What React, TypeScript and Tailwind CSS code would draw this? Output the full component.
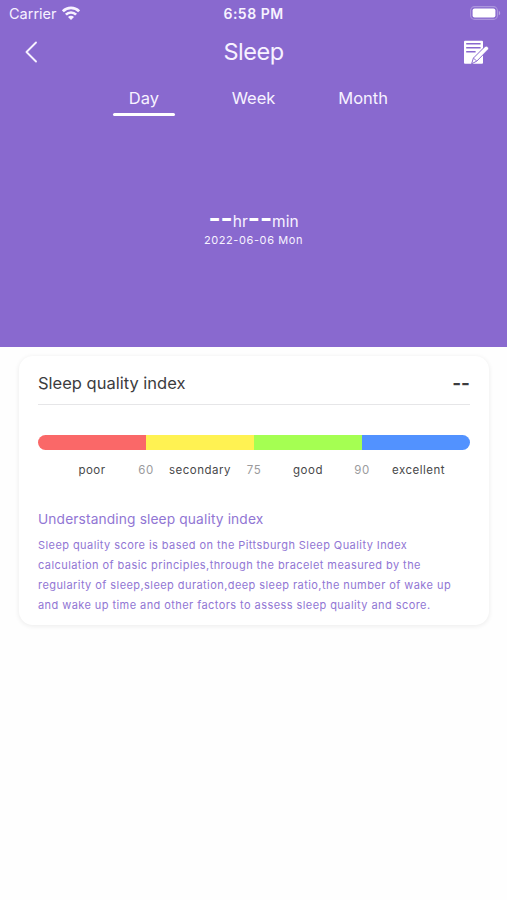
const TABS = ['Day', 'Week', 'Month'];

const LEVELS = [
  { label: 'poor', color: 'bg-[#fa6868]', limit: '60' },
  { label: 'secondary', color: 'bg-[#fff252]', limit: '75' },
  { label: 'good', color: 'bg-[#a5ff52]', limit: '90' },
  { label: 'excellent', color: 'bg-[#5292ff]' },
];

const DESCRIPTION = [
  'Sleep quality score is based on the Pittsburgh Sleep Quality Index',
  'calculation of basic principles,through the bracelet measured by the',
  'regularity of sleep,sleep duration,deep sleep ratio,the number of wake up',
  'and wake up time and other factors to assess sleep quality and score.',
];

function WifiIcon() {
  return (
    <svg className="-mt-0.5" width="18" height="14" viewBox="0 0 18 14" fill="none" stroke="currentColor" strokeWidth="2.7">
      <path d="M0.9 5.3a11.5 11.5 0 0 1 16.2 0" />
      <path d="M3.9 8.6a7.2 7.2 0 0 1 10.2 0" />
      <path d="M9 14 6 10.9a4.2 4.2 0 0 1 6 0z" fill="currentColor" stroke="none" />
    </svg>
  );
}

function BatteryIcon() {
  return (
    <svg className="-mt-px" width="31" height="14" viewBox="0 0 31 14">
      <rect x="0.6" y="0.6" width="26.8" height="12.8" rx="4" fill="none" stroke="white" strokeOpacity="0.3" strokeWidth="1.1" />
      <rect x="2.6" y="2.4" width="22.8" height="9.2" rx="2" fill="white" />
      <path d="M28.8 4.7v4.6c1.9-.8 1.9-3.8 0-4.6z" fill="white" fillOpacity="0.4" />
    </svg>
  );
}

function NoteIcon() {
  return (
    <svg width="26" height="25" viewBox="0 0 26 25">
      <rect x="1" y="0.8" width="19" height="23" rx="1" fill="white" />
      <path d="M3.2 3.7h14.4M3.2 7.7h14.4M3.2 11.7h9.4" stroke="#8969cf" strokeWidth="1.4" />
      <path d="M8.6 23.8l1.8-5.7L22.1 6.4a1.5 1.5 0 0 1 2.1 0l1 1a1.5 1.5 0 0 1 0 2.1L13.8 21.1z" fill="white" stroke="#8969cf" strokeWidth="1" />
      <path d="M10.4 18.1l3.4 3" stroke="#8969cf" strokeWidth="0.9" />
    </svg>
  );
}

function StatusBar() {
  return (
    <div className="grid h-[27px] grid-cols-3 items-center pr-1.5 pl-[9px] text-[14.5px]">
      <div className="flex items-center gap-[5px]">
        <span>Carrier</span>
        <WifiIcon />
      </div>
      <span className="-ml-[3px] text-center text-[14px] font-semibold tracking-[0.5px]">6:58 PM</span>
      <div className="flex justify-end">
        <BatteryIcon />
      </div>
    </div>
  );
}

function QualityCard() {
  return (
    <section className="mr-[18px] ml-[19px] mt-[9px] h-[269px] rounded-[14px] bg-white px-[19px] shadow-[0_1px_4px_1px_rgba(0,0,0,0.06)]">
      <div className="flex h-[49px] items-center justify-between border-b border-[#e6e6e8] pt-1.5 text-[#3c3c3e]">
        <h2 className="text-[16.5px]">Sleep quality index</h2>
        <span className="pt-0.5 text-[19px] leading-6 font-bold">--</span>
      </div>

      <div className="mt-[30px] flex h-[15px] overflow-hidden rounded-full">
        {LEVELS.map((level) => (
          <div key={level.label} className={`flex-1 ${level.color}`} />
        ))}
      </div>

      <div className="mt-[11px] grid grid-cols-4 text-center text-[11.5px] leading-[18px] tracking-[0.5px] text-[#48484a]">
        {LEVELS.map((level) => (
          <div key={level.label} className="relative last:pl-[5px]">
            {level.label}
            {level.limit && (
              <span className="absolute top-0 right-0 translate-x-1/2 text-[#9b9b9d]">{level.limit}</span>
            )}
          </div>
        ))}
      </div>

      <h3 className="mt-[30px] text-[13.75px] leading-5 tracking-[0.13px] text-[#9176d4]">
        Understanding sleep quality index
      </h3>
      <p className="mt-1.5 text-[11px] leading-5 tracking-[0.43px] whitespace-nowrap text-[#9176d4]">
        {DESCRIPTION.map((line) => (
          <span key={line} className="block">{line}</span>
        ))}
      </p>
    </section>
  );
}

export default function App() {
  return (
    <div className="h-[900px] w-[507px] overflow-hidden bg-[#fefefe] font-['Inter','Liberation_Sans',sans-serif]">
      <header className="h-[347px] bg-[#8969cf] text-[#f7f2ff]">
        <StatusBar />
        <div className="grid h-[50px] grid-cols-3 items-center pr-[18px] pl-6">
          <svg width="14" height="22" viewBox="0 0 14 22" fill="none" stroke="currentColor" strokeWidth="1.9" strokeLinecap="round" strokeLinejoin="round">
            <path d="M12 1.5 2.5 11l9.5 9.5" />
          </svg>
          <h1 className="-ml-[6px] text-center text-[23.5px] tracking-[-0.5px]">Sleep</h1>
          <div className="flex justify-end">
            <NoteIcon />
          </div>
        </div>

        <nav className="mx-[89px] mt-[7px] grid h-8 grid-cols-3 text-[16.5px]">
          {TABS.map((tab, i) => (
            <div key={tab} className="flex flex-col items-center justify-between">
              <span className="leading-7">{tab}</span>
              {i === 0 && <span className="h-[3px] w-[62px] rounded-full bg-white" />}
            </div>
          ))}
        </nav>

        <div className="mt-[91px] text-center">
          <div className="flex items-baseline justify-center text-[15.5px] leading-[22px]">
            <span className="text-[26px] font-bold text-white">--</span>
            <span>hr</span>
            <span className="text-[26px] font-bold text-white">--</span>
            <span>min</span>
          </div>
          <p className="text-[11px] leading-[14px] tracking-[0.6px]">2022-06-06 Mon</p>
        </div>
      </header>

      <QualityCard />
    </div>
  );
}
